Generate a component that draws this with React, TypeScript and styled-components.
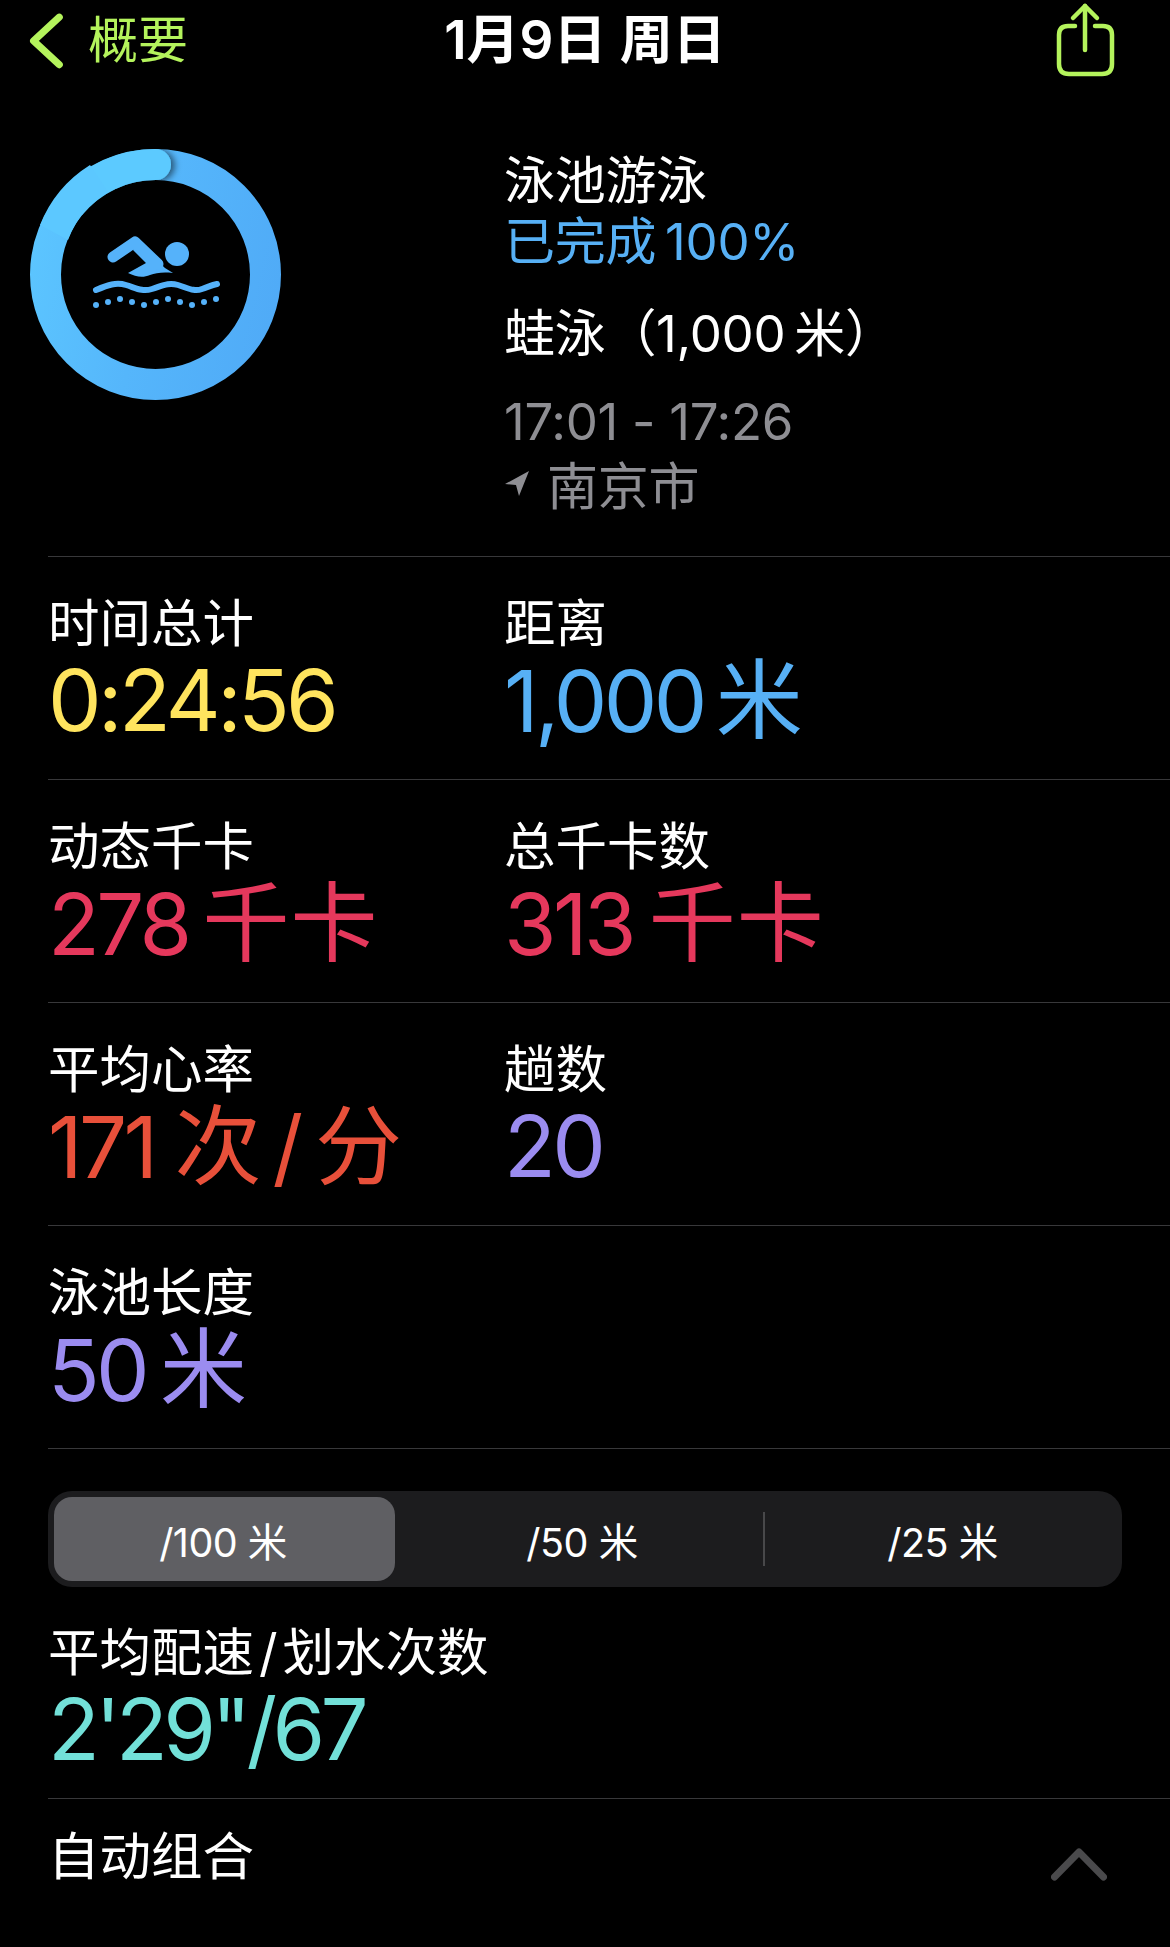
import React from "react";
import styled, { createGlobalStyle } from "styled-components";

const Global = createGlobalStyle`
  html, body { margin: 0; padding: 0; background: #000; }
  body {
    width: 1170px;
    height: 1947px;
    overflow: hidden;
    font-family: Inter, "Noto Sans CJK SC", "Noto Sans", sans-serif;
    color: #fff;
  }
`;

const Page = styled.div`
  width: 1170px;
  height: 1947px;
  background: #000;
`;

const NavBar = styled.header`
  display: grid;
  grid-template-columns: 1fr auto 1fr;
  align-items: center;
  height: 80px;
`;

const BackLink = styled.div`
  display: flex;
  align-items: center;
  gap: 24px;
  padding-left: 26px;
  color: #b4f35c;
  font-size: 50px;
  font-weight: 400;
  line-height: 80px;
`;

const Title = styled.h1`
  margin: -1px 0 0;
  font-size: 53px;
  font-weight: 600;
  line-height: 80px;
`;

const ShareSlot = styled.div`
  display: flex;
  justify-content: flex-end;
  padding-right: 54px;
`;

const Hero = styled.section`
  display: grid;
  grid-template-columns: 504px 1fr;
  height: 476px;
`;

const RingBox = styled.div`
  padding: 69px 0 0 30px;
`;

const HeroText = styled.div`
  display: flex;
  flex-direction: column;
  padding-top: 66px;
`;

const HeroLine = styled.div<{ $color?: string; $gap?: number }>`
  display: flex;
  align-items: center;
  height: 61px;
  font-size: 51px;
  font-weight: 400;
  letter-spacing: -0.3px;
  white-space: pre;
  color: ${(p) => p.$color ?? "#fff"};
  margin-top: ${(p) => p.$gap ?? 0}px;
`;

const Row = styled.section`
  display: grid;
  grid-template-columns: 456px 1fr;
  height: 223px;
  margin-left: 48px;
  border-top: 1px solid #38383a;
  box-sizing: border-box;
`;

const Rule = styled.div`
  margin-left: 48px;
  border-top: 1px solid #38383a;
`;

const Stat = styled.div`
  display: flex;
  flex-direction: column;
  padding-top: 36px;
`;

const Label = styled.div`
  height: 62px;
  line-height: 60px;
  font-size: 51.5px;
  font-weight: 400;
  white-space: pre;
`;

const LabelSlash = styled.span`
  margin: 0 5px;
`;

const Value = styled.div<{ $color: string; $tight?: boolean }>`
  height: 92px;
  line-height: 92px;
  font-size: 85px;
  font-weight: 380;
  letter-spacing: ${(p) => (p.$tight ? "-4.6px" : "-3.6px")};
  white-space: pre;
  color: ${(p) => p.$color};
`;

const Unit = styled.span<{ $gap?: number }>`
  margin-left: ${(p) => p.$gap ?? 14}px;
  font-size: 87px;
  letter-spacing: 1px;
`;

const Sep = styled.span`
  margin-left: 10px;
  letter-spacing: 0;
`;

const Segmented = styled.div`
  display: grid;
  grid-template-columns: 341px 370px 1fr;
  box-sizing: border-box;
  width: 1074px;
  height: 96px;
  margin: 42px 0 0 48px;
  padding: 6px;
  border-radius: 24px;
  background: #1c1c1e;
`;

const Segment = styled.div<{ $active?: boolean; $divider?: boolean }>`
  position: relative;
  display: flex;
  align-items: center;
  justify-content: center;
  border-radius: 18px;
  padding: ${(p) => (p.$active ? "0 3px 0 0" : "0 0 0 4px")};
  font-size: 39.5px;
  font-weight: 400;
  letter-spacing: -0.5px;
  white-space: pre;
  background: ${(p) => (p.$active ? "#5f5f63" : "transparent")};
  &::after {
    content: "";
    display: ${(p) => (p.$divider ? "block" : "none")};
    position: absolute;
    right: 0;
    top: 15px;
    bottom: 15px;
    width: 2px;
    background: #48484a;
  }
`;

const PaceRow = styled.section`
  margin-left: 48px;
  height: 211px;
  box-sizing: border-box;
  padding-top: 35px;
`;

const GroupRow = styled.section`
  display: flex;
  justify-content: space-between;
  align-items: flex-start;
  box-sizing: border-box;
  margin-left: 48px;
  padding: 27px 63px 0 0;
  height: 120px;
  border-top: 1px solid #38383a;
`;

const ChevronSlot = styled.div`
  padding-top: 21px;
`;

const Chevron = () => (
  <svg width="38" height="60" viewBox="24 10 40 60" fill="none">
    <path d="M59 16 L32 41 L59 66" stroke="#b4f35c" strokeWidth="7.5" strokeLinecap="round" strokeLinejoin="round" />
  </svg>
);

const ShareIcon = () => (
  <svg width="60" height="76" viewBox="1056 1 60 76" fill="none" stroke="#b4f35c" strokeWidth="4.5" strokeLinecap="round" strokeLinejoin="round">
    <path d="M1075 25 H1068 Q1059 25 1059 34 V63 Q1059 73 1069 73 H1102 Q1112 73 1112 63 V34 Q1112 25 1103 25 H1095" />
    <path d="M1085 49 V5" />
    <path d="M1073 17 L1085 5 L1097 17" />
  </svg>
);

const dots: [number, number][] = [
  [96, 305], [108, 302], [120, 299], [132, 302], [144, 305], [156, 302],
  [168, 299], [180, 302], [192, 305], [204, 302], [216, 299],
];

const Ring = () => (
  <svg width="252" height="252" viewBox="30 149 252 252" fill="none" style={{ display: "block" }}>
    <defs>
      <linearGradient id="ringGrad" x1="30" y1="220" x2="282" y2="280" gradientUnits="userSpaceOnUse">
        <stop offset="0" stopColor="#5cc6ff" />
        <stop offset="0.5" stopColor="#55b6fb" />
        <stop offset="1" stopColor="#50abf7" />
      </linearGradient>
      <filter id="capShadow" x="-50%" y="-50%" width="200%" height="200%">
        <feDropShadow dx="4" dy="1" stdDeviation="3" floodColor="#000" floodOpacity="0.5" />
      </filter>
    </defs>
    <circle cx="155.5" cy="274.5" r="110" stroke="url(#ringGrad)" strokeWidth="31" />
    <path d="M155.5 149 A15.5 15.5 0 0 1 155.5 180 A94.5 94.5 0 0 0 82 215 L60 192 A125.5 125.5 0 0 1 155.5 149 Z" fill="#5ccaff" filter="url(#capShadow)" />
    <path d="M90 165 A125.5 125.5 0 0 0 40 225 L68 240 A94.5 94.5 0 0 1 108 192 Z" fill="#5cc8ff" />
    <g fill="#55b2fa" stroke="none">
      <circle cx="177" cy="254" r="12" />
      <path d="M128 273 L146 263 L133 250 L136 240 L165 268 L173 273 C162 272 156 273 150 275 C143 278 136 277 128 273 Z" />
      {dots.map(([x, y]) => (
        <circle key={x} cx={x} cy={y} r="3" />
      ))}
    </g>
    <path d="M113 257 L135 242 L158 264" stroke="#55b2fa" strokeWidth="11" strokeLinecap="round" strokeLinejoin="round" />
    <path d="M96 290 C108 285 116 282 126 285 C136 288 142 292 152 289 C162 286 168 282 178 285 C188 288 194 292 202 289 C208 287 212 285 217 284" stroke="#55b2fa" strokeWidth="6" strokeLinecap="round" />
  </svg>
);

const LocationArrow = () => (
  <svg width="26" height="26" viewBox="0 0 26 26" style={{ marginRight: 17 }}>
    <path d="M25 1 L1 14 L12 15 L15 26 Z" fill="#8e8e93" />
  </svg>
);

const ChevronUp = () => (
  <svg width="56" height="34" viewBox="0 0 56 34" fill="none" style={{ display: "block" }}>
    <path d="M3.5 30 L28 5 L52.5 30" stroke="#4a4a4c" strokeWidth="7" strokeLinecap="round" strokeLinejoin="round" />
  </svg>
);

const TS = "\u2009";

type StatData = { label: string; num: string; unit?: string; per?: string; gap?: number; color: string };

const rows: StatData[][] = [
  [
    { label: "时间总计", num: "0:24:56", color: "#ffe45e" },
    { label: "距离", num: "1,000", unit: "米", gap: 12, color: "#57b0f5" },
  ],
  [
    { label: "动态千卡", num: "278", unit: "千卡", color: "#e5385c" },
    { label: "总千卡数", num: "313", unit: "千卡", gap: 16, color: "#e5385c" },
  ],
  [
    { label: "平均心率", num: "171", unit: "次", per: "分", gap: 20, color: "#e8503a" },
    { label: "趟数", num: "20", color: "#9b8cf0" },
  ],
  [{ label: "泳池长度", num: "50", unit: "米", color: "#9b8cf0" }],
];

export default function App() {
  return (
    <Page>
      <Global />
      <NavBar>
        <BackLink>
          <Chevron />
          概要
        </BackLink>
        <Title>1月9日 周日</Title>
        <ShareSlot>
          <ShareIcon />
        </ShareSlot>
      </NavBar>
      <Hero>
        <RingBox>
          <Ring />
        </RingBox>
        <HeroText>
          <HeroLine>泳池游泳</HeroLine>
          <HeroLine $color="#57b0f5">{`已完成${TS}100%`}</HeroLine>
          <HeroLine $gap={31}>{`蛙泳（1,000${TS}米）`}</HeroLine>
          <HeroLine $color="#8e8e93" $gap={31}>17:01 - 17:26</HeroLine>
          <HeroLine $color="#8e8e93">
            <LocationArrow />
            南京市
          </HeroLine>
        </HeroText>
      </Hero>
      {rows.map((r) => (
        <Row key={r[0].label}>
          {r.map((s) => (
            <Stat key={s.label}>
              <Label>{s.label}</Label>
              <Value $color={s.color}>
                {s.num}
                {s.unit && <Unit $gap={s.gap}>{s.unit}</Unit>}
                {s.per && <Sep>/</Sep>}
                {s.per && <Unit $gap={12}>{s.per}</Unit>}
              </Value>
            </Stat>
          ))}
        </Row>
      ))}
      <Rule />
      <Segmented>
        <Segment $active>/100 米</Segment>
        <Segment $divider>/50 米</Segment>
        <Segment>/25 米</Segment>
      </Segmented>
      <PaceRow>
        <Label>
          平均配速<LabelSlash>/</LabelSlash>划水次数
        </Label>
        <Value $color="#72e0d8" $tight>{`2'29"/67`}</Value>
      </PaceRow>
      <GroupRow>
        <Label>自动组合</Label>
        <ChevronSlot>
          <ChevronUp />
        </ChevronSlot>
      </GroupRow>
    </Page>
  );
}
